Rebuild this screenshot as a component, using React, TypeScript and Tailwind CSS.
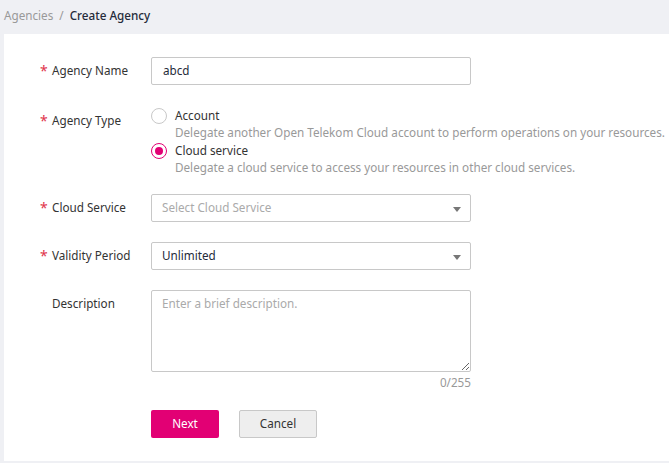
import React from "react";

const Star = () => (
  <span className="w-[13px] text-[#e0344b] text-[14px] leading-none">*</span>
);

function Label({ text, required = true }: { text: string; required?: boolean }) {
  return (
    <div className="w-[111px] shrink-0 h-[28px] flex items-center text-[11.7px] text-[#333]">
      <span className="w-[12px] flex items-center">{required ? <Star /> : null}</span>
      <span>{text}</span>
    </div>
  );
}

function Caret() {
  return (
    <svg width="8" height="5" viewBox="0 0 8 5" className="absolute right-[9px] top-[12px]">
      <path d="M0 0 L8 0 L4 5 Z" fill="#777" />
    </svg>
  );
}

function Radio({ checked }: { checked?: boolean }) {
  return (
    <span
      className={
        "w-[16px] h-[16px] rounded-full border flex items-center justify-center shrink-0 bg-white " +
        (checked ? "border-[#e20074]" : "border-[#c8c8c8]")
      }
    >
      {checked ? <span className="w-[8px] h-[8px] rounded-full bg-[#e20074]" /> : null}
    </span>
  );
}

export default function App() {
  return (
    <div
      className="w-[669px] h-[463px] bg-[#eff0f4] overflow-hidden"
      style={{ fontFamily: '"Noto Sans", "Open Sans", sans-serif' }}
    >
      <div className="h-[34px] flex items-center pl-[4px] text-[11.7px] pb-[2px]">
        <span className="text-[#999]">Agencies</span>
        <span className="text-[#999] mx-[6px]">/</span>
        <span className="text-[#252b3a] font-medium">Create Agency</span>
      </div>
      <div className="ml-[4px] bg-white h-[427px] pt-[23px] pl-[36px]">
        {/* Agency Name */}
        <div className="flex">
          <Label text="Agency Name" />
          <div className="w-[320px] h-[28px] border border-[#c8c8c8] rounded-[2px] flex items-center px-[11px] text-[11.7px] text-[#252b3a]">
            abcd
          </div>
        </div>
        {/* Agency Type */}
        <div className="flex mt-[22px]">
          <Label text="Agency Type" />
          <div className="flex flex-col text-[11.7px]">
            <div className="flex">
              <div className="w-[24px] h-[17px] flex items-center">
                <Radio />
              </div>
              <div className="flex flex-col">
                <span className="leading-[17px] text-[#333]">Account</span>
                <span className="leading-[16px] text-[#999] whitespace-nowrap">
                  Delegate another Open Telekom Cloud account to perform operations on your resources.
                </span>
              </div>
            </div>
            <div className="flex mt-[2px]">
              <div className="w-[24px] h-[17px] flex items-center">
                <Radio checked />
              </div>
              <div className="flex flex-col">
                <span className="leading-[17px] text-[#333]">Cloud service</span>
                <span className="leading-[16px] text-[#999] whitespace-nowrap">
                  Delegate a cloud service to access your resources in other cloud services.
                </span>
              </div>
            </div>
          </div>
        </div>
        {/* Cloud Service */}
        <div className="flex mt-[19px]">
          <Label text="Cloud Service" />
          <div className="relative w-[320px] h-[28px] border border-[#c8c8c8] rounded-[2px] flex items-center px-[10px] text-[11.7px] text-[#aaa]">
            Select Cloud Service
            <Caret />
          </div>
        </div>
        {/* Validity Period */}
        <div className="flex mt-[20px]">
          <Label text="Validity Period" />
          <div className="relative w-[320px] h-[28px] border border-[#c8c8c8] rounded-[2px] flex items-center px-[10px] text-[11.7px] text-[#252b3a]">
            Unlimited
            <Caret />
          </div>
        </div>
        {/* Description */}
        <div className="flex mt-[20px]">
          <Label text="Description" required={false} />
          <div className="flex flex-col w-[320px]">
            <textarea
              className="w-[320px] h-[82px] border border-[#c8c8c8] rounded-[2px] px-[10px] py-[4px] text-[11.7px] text-[#252b3a] placeholder:text-[#aaa] outline-none resize-y"
              placeholder="Enter a brief description."
              style={{ fontFamily: '"Noto Sans", "Open Sans", sans-serif' }}
            />
            <div className="text-right text-[11.7px] text-[#999] leading-[18px] mt-[1px]">0/255</div>
          </div>
        </div>
        {/* Buttons */}
        <div className="flex mt-[19px] pl-[111px] gap-[20px]">
          <button className="w-[68px] h-[28px] bg-[#e20074] text-white text-[11.7px] rounded-[2px]">
            Next
          </button>
          <button className="w-[78px] h-[28px] bg-[#eeeeee] border border-[#c8c8c8] text-[#333] text-[11.7px] rounded-[2px]">
            Cancel
          </button>
        </div>
      </div>
    </div>
  );
}
